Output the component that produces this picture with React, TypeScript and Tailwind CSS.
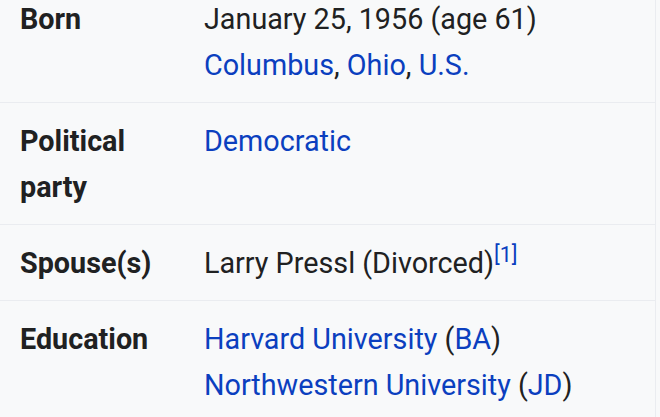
import React from "react";

const link = "text-[#0b3fbf]";

function Row({ label, children }: { label: React.ReactNode; children: React.ReactNode }) {
  return (
    <div className="flex border-t border-[#eaecf0] first:border-t-0 pt-[15px] pb-[14px]">
      <div className="w-[204px] shrink-0 pl-[20px] pr-[20px] font-bold text-[#202122]">{label}</div>
      <div className="flex-1 text-[#202122]">{children}</div>
    </div>
  );
}

export default function App() {
  return (
    <div
      className="w-[660px] h-[417px] overflow-hidden bg-[#f8f9fa]"
      style={{ fontFamily: "Roboto, 'Noto Sans', sans-serif" }}
    >
      <div className="w-[656px] -mt-[19px] border-r border-[#eaecf0] text-[28.75px] leading-[46px] bg-[#f8f9fa]">
        <Row label="Born">
          <div>January 25, 1956 (age 61)</div>
          <div>
            <span className={link}>Columbus</span>, <span className={link}>Ohio</span>,{" "}
            <span className={link}>U.S.</span>
          </div>
        </Row>
        <Row label="Political party">
          <span className={link}>Democratic</span>
        </Row>
        <Row label="Spouse(s)">
          Larry Pressl (Divorced)
          <sup className={`${link} text-[21.5px] leading-none`}>[1]</sup>
        </Row>
        <Row label="Education">
          <div>
            <span className={link}>Harvard University</span> (<span className={link}>BA</span>)
          </div>
          <div>
            <span className={link}>Northwestern University</span> (<span className={link}>JD</span>)
          </div>
        </Row>
      </div>
    </div>
  );
}
